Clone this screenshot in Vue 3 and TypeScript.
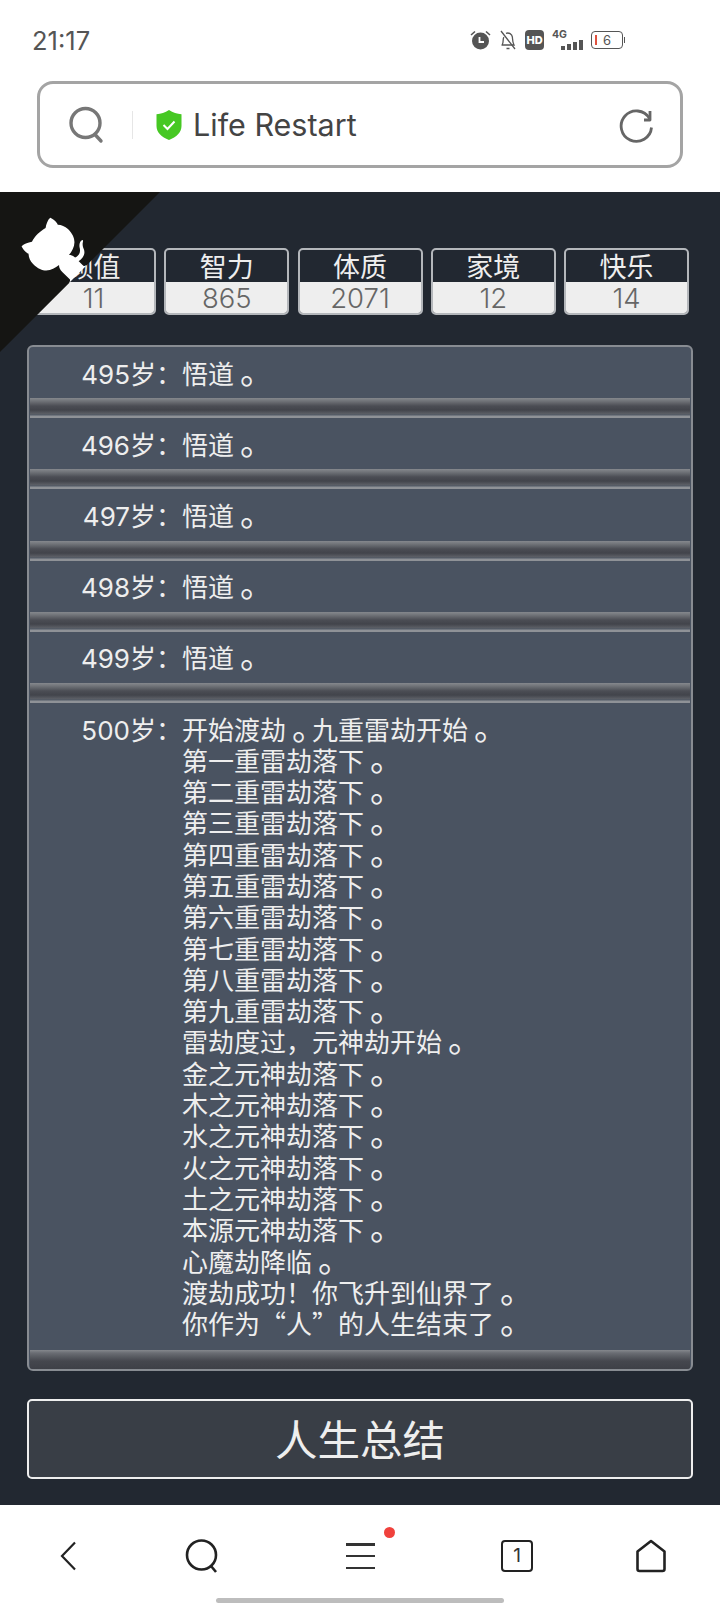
<template>
  <div class="page">
    <header class="status-bar">
      <span class="time">21:17</span>
      <div class="status-icons">
        <svg width="21" height="20" viewBox="0 0 21 20">
          <circle cx="10.500" cy="11" r="8.500" fill="#555" />
          <path d="M9.500 7v5h4.500" fill="none" stroke="#fff" stroke-width="1.800" />
          <path d="M1 5l4-3.500M20 5l-4-3.500" stroke="#555" stroke-width="1.600" />
        </svg>
        <svg width="18" height="20" viewBox="0 0 18 20" fill="none" stroke="#555" stroke-width="1.300">
          <path d="M3 15c1-1.500 1.200-3 1.200-5 0-1 .2-2 .7-2.800M7 3.400c2.800-1.200 6 .6 6.400 3.800.2 2.700.2 5.300 1.600 7.800H2.500" />
          <path d="M2 1l14 18M7.500 18.500h3" />
        </svg>
        <div class="hd">HD</div>
        <div class="signal">
          <span class="net">4G</span>
          <div class="bars">
            <i v-for="h in signalBars" :key="h" :style="{ height: h + 'px' }"></i>
          </div>
        </div>
        <div class="battery">
          <i class="level"></i>
          <span>6</span>
          <i class="nub"></i>
        </div>
      </div>
    </header>

    <div class="url-wrap">
      <div class="url-box">
        <svg width="38" height="38" viewBox="0 0 38 38" fill="none" stroke="#777" stroke-width="3.400">
          <circle cx="17.500" cy="17" r="14.500" />
          <path d="M27 28.500l6 6.500" stroke-linecap="round" />
        </svg>
        <i class="url-sep"></i>
        <svg width="28" height="32" viewBox="0 0 28 32">
          <path d="M14 1c4 2.600 8 3.800 12.500 4.200V17c0 6.500-5 11-12.500 14C6.500 28 1.500 23.500 1.500 17V5.200C6 4.800 10 3.600 14 1z" fill="#46c823" />
          <path d="M8.500 16l4 4 7-7.500" fill="none" stroke="#fff" stroke-width="2" />
        </svg>
        <span class="url-text">Life Restart</span>
        <svg class="url-reload" width="34" height="36" viewBox="0 0 34 36" fill="none" stroke="#666" stroke-width="2.800">
          <path d="M32.500 20.500A15.200 15.200 0 1 1 30.500 11.500" />
          <path d="M31 4v9h-6" stroke-linejoin="round" />
        </svg>
      </div>
    </div>

    <main class="game">
      <a class="corner">
        <svg width="160" height="160" viewBox="0 0 250 250">
          <g transform="translate(250,0) scale(-1,1)">
            <path d="M0,0 L115,115 L130,115 L142,142 L250,250 L250,0 Z" fill="#151513" />
            <path d="M128.3,109.0 C113.8,99.7 119.0,89.6 119.0,89.6 C122.0,82.7 120.5,78.6 120.5,78.6 C119.2,72.0 123.4,76.3 123.4,76.3 C127.3,80.9 125.5,87.3 125.5,87.3 C122.9,97.6 130.6,101.9 134.4,103.2" fill="#fff" />
            <path d="M115.0,115.0 C114.9,115.1 118.7,116.5 119.8,115.4 L133.7,101.6 C136.9,99.2 139.9,98.4 142.2,98.6 C133.8,88.0 127.5,74.4 143.8,58.0 C148.5,53.4 154.0,51.2 159.7,51.0 C160.3,49.4 163.2,43.6 171.4,40.1 C171.4,40.1 176.1,42.5 178.8,56.2 C183.1,58.6 187.2,61.8 190.9,65.4 C194.5,69.0 197.7,73.2 200.1,77.6 C213.8,80.2 216.3,84.9 216.3,84.9 C212.7,93.1 206.9,96.0 205.4,96.6 C205.1,102.4 203.0,107.8 198.3,112.5 C181.9,128.9 168.3,122.5 157.7,114.1 C157.9,116.9 156.7,120.9 152.7,124.9 L141.0,136.5 C139.8,137.7 141.6,141.9 141.8,141.8 Z" fill="#fff" />
          </g>
        </svg>
      </a>

      <ul class="stats">
        <li v-for="stat in stats" :key="stat.label" class="stat">
          <span class="stat-label">{{ stat.label }}</span>
          <span class="stat-value">{{ stat.value }}</span>
        </li>
      </ul>

      <ul class="log">
        <li v-for="row in rows" :key="row.age" class="log-row">
          <div class="log-body">
            <span class="log-age"><span class="num">{{ row.age }}</span>岁：</span>
            <div class="log-lines">
              <div v-for="line in row.lines" :key="line">
                <template v-for="(part, i) in splitStops(line)" :key="i">
                  <span v-if="part === '。'" class="stop">{{ part }}</span>
                  <template v-else>{{ part }}</template>
                </template>
              </div>
            </div>
          </div>
          <i class="log-sep"></i>
        </li>
      </ul>

      <button class="summary-btn">人生总结</button>
    </main>

    <nav class="bottom-nav">
      <svg width="18" height="30" viewBox="0 0 18 30" fill="none" stroke="#222" stroke-width="2.200">
        <path d="M16 1.500L3 15l13 13.500" />
      </svg>
      <svg width="36" height="36" viewBox="0 0 36 36" fill="none" stroke="#222" stroke-width="2.600">
        <circle cx="17.500" cy="17" r="14.500" />
        <path d="M27 28l5 6" />
      </svg>
      <div class="menu">
        <i></i><i></i><i></i>
        <b class="dot"></b>
      </div>
      <div class="tabs">1</div>
      <svg width="34" height="34" viewBox="0 0 34 34" fill="none" stroke="#222" stroke-width="2.600" stroke-linejoin="round">
        <path d="M17 2l13.500 10.500V30a2 2 0 0 1-2 2h-23a2 2 0 0 1-2-2V12.500z" />
      </svg>
    </nav>
    <div class="home-bar-wrap"><i class="home-bar"></i></div>
  </div>
</template>

<script setup lang="ts">
interface Stat {
  label: string
  value: number
}

interface LogRow {
  age: number
  lines: string[]
}

const signalBars = [4, 6, 8, 10]

const stats: Stat[] = [
  { label: '颜值', value: 11 },
  { label: '智力', value: 865 },
  { label: '体质', value: 2071 },
  { label: '家境', value: 12 },
  { label: '快乐', value: 14 },
]

const rows: LogRow[] = [
  { age: 495, lines: ['悟道。'] },
  { age: 496, lines: ['悟道。'] },
  { age: 497, lines: ['悟道。'] },
  { age: 498, lines: ['悟道。'] },
  { age: 499, lines: ['悟道。'] },
  {
    age: 500,
    lines: [
      '开始渡劫。九重雷劫开始。',
      '第一重雷劫落下。',
      '第二重雷劫落下。',
      '第三重雷劫落下。',
      '第四重雷劫落下。',
      '第五重雷劫落下。',
      '第六重雷劫落下。',
      '第七重雷劫落下。',
      '第八重雷劫落下。',
      '第九重雷劫落下。',
      '雷劫度过，元神劫开始。',
      '金之元神劫落下。',
      '木之元神劫落下。',
      '水之元神劫落下。',
      '火之元神劫落下。',
      '土之元神劫落下。',
      '本源元神劫落下。',
      '心魔劫降临。',
      '渡劫成功！你飞升到仙界了。',
      '你作为“人”的人生结束了。',
    ],
  },
]

// the full stop is larger and sits mid-cell in the reference font
const splitStops = (line: string) => line.split(/(。)/).filter(Boolean)
</script>

<style>
html,
body {
  margin: 0;
  background: #fff;
}
</style>

<style scoped>
.page {
  width: 720px;
  height: 1605px;
  overflow: hidden;
  display: flex;
  flex-direction: column;
  font-family: Inter, "Noto Sans CJK SC", sans-serif;
  background: #fff;
}

.status-bar {
  height: 81px;
  padding: 0 97px 1px 32px;
  display: flex;
  align-items: center;
  justify-content: space-between;
  box-sizing: border-box;
}

.time {
  font-size: 25.500px;
  color: #555;
}

.status-icons {
  display: flex;
  align-items: center;
  gap: 8px;
}

.hd {
  width: 19px;
  height: 20px;
  border-radius: 4px;
  background: #555;
  color: #fff;
  font-size: 11px;
  font-weight: 800;
  line-height: 20px;
  text-align: center;
}

.signal {
  position: relative;
  width: 31px;
  height: 20px;
}

.net {
  position: absolute;
  left: 0;
  top: -2px;
  font-size: 10.500px;
  font-weight: 700;
  color: #555;
}

.bars {
  position: absolute;
  right: 0;
  bottom: 0;
  display: flex;
  align-items: flex-end;
  gap: 2px;
}

.bars i {
  width: 4px;
  background: #555;
}

.battery {
  position: relative;
  width: 30px;
  height: 16px;
  border: 1px solid #555;
  border-radius: 4px;
  font-size: 13px;
  line-height: 16px;
  text-align: center;
  color: #555;
}

.battery .level {
  position: absolute;
  left: 3px;
  top: 3px;
  width: 2px;
  height: 10px;
  background: #e0523f;
}

.battery .nub {
  position: absolute;
  right: -3px;
  top: 5px;
  width: 1px;
  height: 6px;
  background: #555;
}

.url-wrap {
  height: 111px;
  padding: 0 37px;
}

.url-box {
  height: 87px;
  box-sizing: border-box;
  border: 3px solid #a4a4a4;
  border-radius: 16px;
  display: flex;
  align-items: center;
  padding: 0 27px 0 28px;
}

.url-sep {
  width: 1px;
  height: 28px;
  background: #e6e6e6;
  margin: 0 22px 0 26px;
}

.url-text {
  margin-left: 10px;
  font-size: 30.500px;
  color: #444;
}

.url-reload {
  margin-left: auto;
}

.game {
  position: relative;
  height: 1313px;
  background: #222831;
  padding: 56px 27px 0;
  box-sizing: border-box;
  font-size: 26px;
  color: #eeeeee;
  font-family: "Noto Sans CJK SC", sans-serif;
}

.corner {
  position: absolute;
  left: 0;
  top: 0;
  width: 160px;
  height: 160px;
  z-index: 2;
}

.stats {
  list-style: none;
  margin: 0 4px;
  padding: 0;
  display: grid;
  grid-template-columns: repeat(5, 1fr);
  gap: 8.250px;
}

.stat {
  height: 67px;
  box-sizing: border-box;
  border: 2px solid #b4b7bb;
  border-radius: 5px;
  display: flex;
  flex-direction: column;
  overflow: hidden;
  text-align: center;
}

.stat-label {
  height: 32px;
  line-height: 32px;
  font-size: 27px;
  color: #eeeeee;
}

.stat-value {
  flex: 1;
  background: #eeeeee;
  color: #666;
  font-family: Inter, sans-serif;
  font-weight: 300;
  font-size: 27.500px;
  line-height: 32px;
}

.log {
  list-style: none;
  margin: 30px 0 0;
  padding: 0;
  height: 1026px;
  box-sizing: border-box;
  border: 2px solid #888c92;
  border-radius: 6px;
  background: #4a5361;
  overflow: hidden;
}

.log-body {
  display: flex;
  padding: 9.500px 0 10.300px;
  line-height: 31.400px;
}

.log-row:last-child .log-body {
  padding-bottom: 12px;
  line-height: 31.300px;
}

.log-age {
  width: 153px;
  flex: none;
  text-align: right;
}

.num {
  font-family: Inter, sans-serif;
  line-height: 1;
}

.stop {
  display: inline-block;
  width: 26px;
  font-size: 34px;
  line-height: 0;
  text-indent: 6px;
}

.log-sep {
  display: block;
  height: 20px;
  margin: 0 1px;
  background: linear-gradient(#85888d 0, #72757a 14%, #4b4d54 40%, #42444b 60%, #5a5d64 78%, #525a66 85%, #8f9297 90%, #8f9297 100%);
}

.log-row:last-child .log-sep {
  background: linear-gradient(#85888d 0, #6a6d73 15%, #45474e 55%, #3d3f46 100%);
}

.summary-btn {
  display: block;
  width: 100%;
  height: 80px;
  margin-top: 28px;
  padding: 0 0 4px;
  background: #393e46;
  border: 2px solid #eeeeee;
  border-radius: 5px;
  color: #eeeeee;
  font-family: inherit;
  font-size: 42.500px;
}

.bottom-nav {
  height: 88px;
  box-sizing: border-box;
  padding-top: 14px;
  position: relative;
  display: grid;
  grid-template-columns: 136px 132px 184px 130px 138px;
  justify-items: center;
  align-items: center;
}

.menu {
  position: relative;
  width: 29px;
  height: 26px;
  display: flex;
  flex-direction: column;
  justify-content: space-between;
}

.menu i {
  display: block;
  height: 2.500px;
  background: #333;
}

.dot {
  position: absolute;
  left: 38px;
  top: -16px;
  width: 11px;
  height: 11px;
  border-radius: 50%;
  background: #f0413c;
}

.tabs {
  width: 32px;
  height: 32px;
  box-sizing: border-box;
  border: 2.500px solid #222;
  border-radius: 4px;
  color: #333;
  font-size: 19px;
  line-height: 27px;
  text-align: center;
}

.home-bar-wrap {
  flex: 1;
  display: flex;
  justify-content: center;
}

.home-bar {
  display: block;
  width: 288px;
  height: 5px;
  margin-top: 5px;
  border-radius: 3px;
  background: #bdbdbd;
}
</style>
